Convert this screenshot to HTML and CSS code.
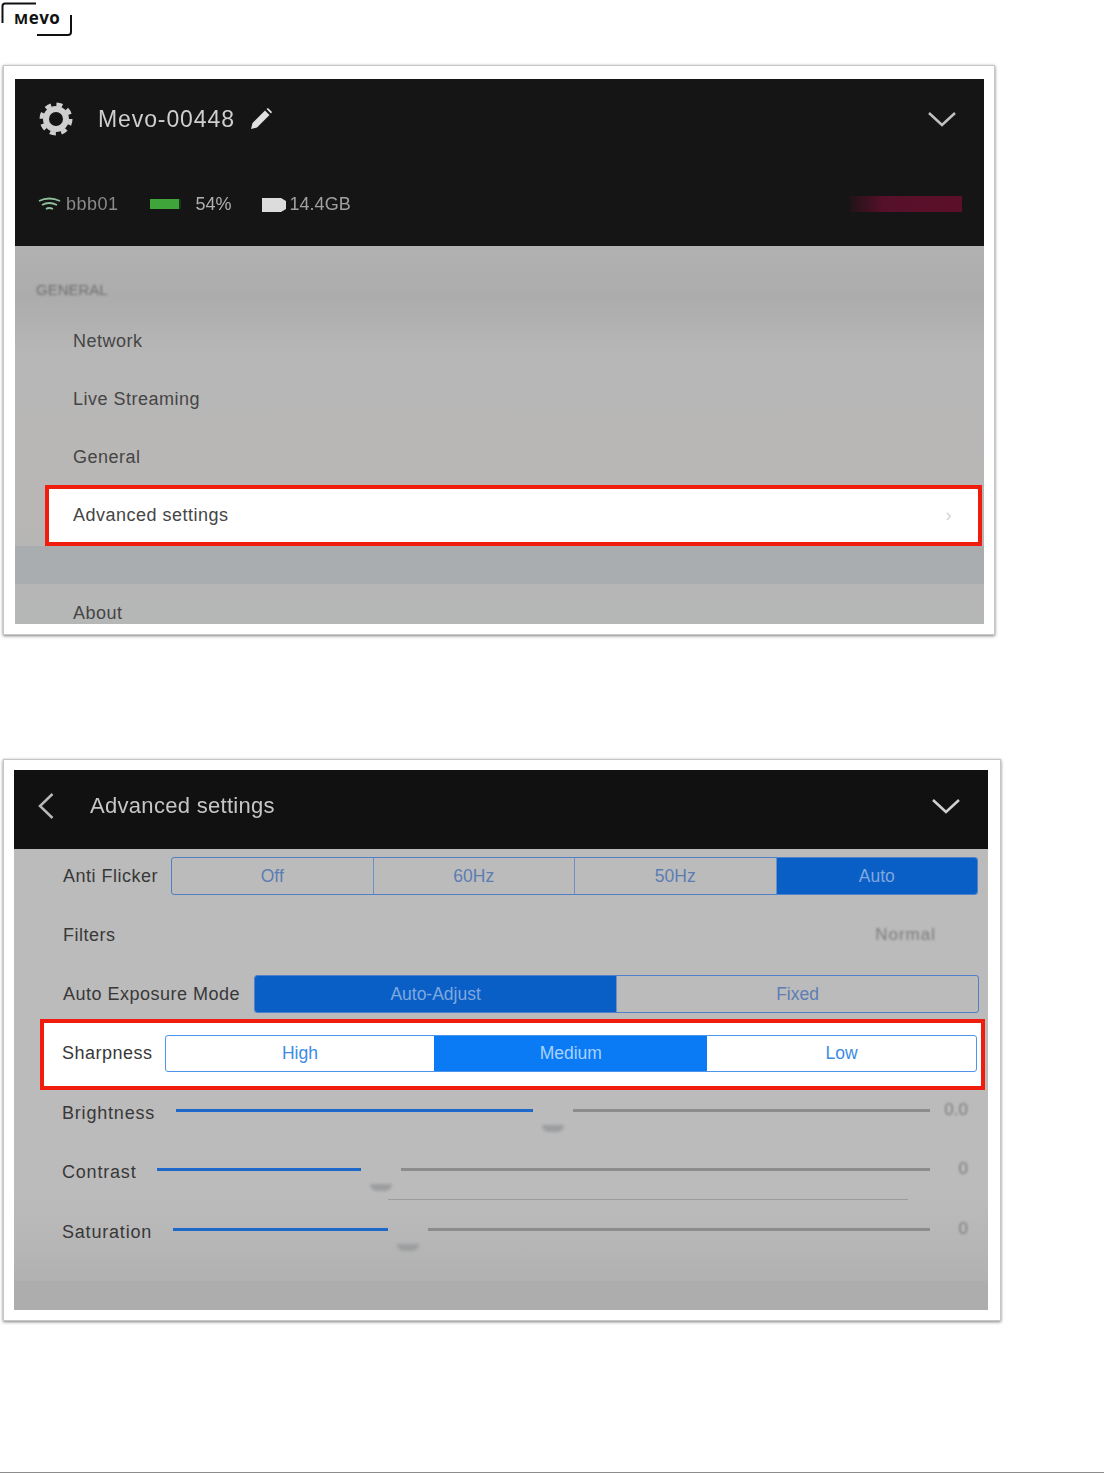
FILE: index.html
```html
<!DOCTYPE html>
<html lang="en">
<head>
  <meta charset="UTF-8" />
  <meta name="viewport" content="width=device-width, initial-scale=1.0" />
  <title>Mevo advanced settings</title>
  <link rel="stylesheet" href="styles.css">
</head>
<body>
  <header class="logo-bar">
    <svg class="logo" width="76" height="40" viewBox="0 0 76 40">
      <path d="M2.5 23V6Q2.5 3.500 5 3.500H36M71 15V32Q71 35 68 35H37" fill="none" stroke="#111" stroke-width="2"/>
      <text x="14" y="24" class="logo-text"><tspan class="logo-cap">M</tspan>evo</text>
    </svg>
  </header>

  <section class="card card-menu">
    <div class="screen">
      <div class="device-head">
        <div class="device-title">
          <svg class="gear" width="36" height="36" viewBox="0 0 36 36">
            <circle cx="18" cy="18" r="10" fill="none" stroke="#cfcfcf" stroke-width="6"/>
            <circle cx="18" cy="18" r="14.500" fill="none" stroke="#cfcfcf" stroke-width="4" stroke-dasharray="6 5.390"/>
          </svg>
          <span class="device-name">Mevo-00448</span>
          <svg width="24" height="24" viewBox="0 0 24 24">
            <path d="M2 22l1.500-6L16 3.500l4.500 4.500L8 20.500zM17.500 2l1.500-1 4 4-1 1.500z" fill="#e0e0e0"/>
          </svg>
          <svg class="chevron" width="30" height="18" viewBox="0 0 30 18">
            <path d="M2 3l13 12L28 3" fill="none" stroke="#c0c0c0" stroke-width="2.500"/>
          </svg>
        </div>
        <div class="device-status">
          <svg width="23" height="14" viewBox="0 0 23 14">
            <path d="M1 4q10-5 21 0M4 8q7-4 15 0M8 12q3-2 7 0" fill="none" stroke="#8fbf9a" stroke-width="1.800"/>
          </svg>
          <span class="stat stat-ssid">bbb01</span>
          <span class="battery"></span>
          <span class="stat stat-pct">54%</span>
          <svg class="sd" width="24" height="15" viewBox="0 0 24 15">
            <path d="M0 1h19l5 3v8l-5 3H0z" fill="#dcdcdc"/>
          </svg>
          <span class="stat">14.4GB</span>
          <span class="rec-bar"></span>
        </div>
      </div>
      <div class="menu">
        <p class="menu-heading">GENERAL</p>
        <div class="menu-row">Network</div>
        <div class="menu-row">Live Streaming</div>
        <div class="menu-row">General</div>
        <div class="menu-row menu-row-on">Advanced settings<span class="row-arrow">›</span></div>
        <div class="menu-gap"></div>
        <div class="menu-row menu-row-last">About</div>
      </div>
    </div>
  </section>

  <section class="card card-settings">
    <div class="screen">
      <div class="settings-head">
        <svg width="18" height="28" viewBox="0 0 18 28">
          <path d="M15.500 2L3 14l12.500 12" fill="none" stroke="#b8b8b8" stroke-width="2.500"/>
        </svg>
        <span class="settings-title">Advanced settings</span>
        <svg class="chevron" width="30" height="18" viewBox="0 0 30 18">
          <path d="M2 3l13 12L28 3" fill="none" stroke="#d0d0d0" stroke-width="2.500"/>
        </svg>
      </div>
      <div class="settings">
        <div class="row row-flicker">
          <span class="row-label">Anti Flicker</span>
          <div class="seg seg-dim">
            <span class="seg-item">Off</span>
            <span class="seg-item">60Hz</span>
            <span class="seg-item">50Hz</span>
            <span class="seg-item seg-on">Auto</span>
          </div>
        </div>
        <div class="row row-filters">
          <span class="row-label">Filters</span>
          <span class="filter-value">Normal</span>
        </div>
        <div class="row row-exposure">
          <span class="row-label">Auto Exposure Mode</span>
          <div class="seg seg-dim">
            <span class="seg-item seg-on seg-half">Auto-Adjust</span>
            <span class="seg-item">Fixed</span>
          </div>
        </div>
        <div class="row-sharp">
          <span class="row-label">Sharpness</span>
          <div class="seg seg-bright">
            <span class="seg-item">High</span>
            <span class="seg-item seg-on">Medium</span>
            <span class="seg-item">Low</span>
          </div>
        </div>
        <div class="slider slider-first">
          <span class="row-label">Brightness</span>
          <span class="fill" style="width: 357px"></span>
          <span class="thumb"></span>
          <span class="rest"></span>
          <span class="slider-value">0.0</span>
        </div>
        <div class="slider">
          <span class="row-label">Contrast</span>
          <span class="fill" style="width: 204px"></span>
          <span class="thumb"></span>
          <span class="rest"></span>
          <span class="slider-value">0</span>
        </div>
        <div class="divider"></div>
        <div class="slider slider-last">
          <span class="row-label">Saturation</span>
          <span class="fill" style="width: 215px"></span>
          <span class="thumb"></span>
          <span class="rest"></span>
          <span class="slider-value">0</span>
        </div>
        <div class="settings-foot"></div>
      </div>
    </div>
  </section>

  <footer class="page-rule"></footer>
</body>
</html>
```

FILE: styles.css
```css
* {
  box-sizing: border-box;
}
html,
body {
  margin: 0;
  height: 1473px;
  overflow: hidden;
}
body {
  display: flex;
  flex-direction: column;
  background: #fff;
  font-family: "Liberation Sans", Arial, sans-serif;
}
.logo-bar {
  height: 65px;
  flex: none;
}
.logo {
  display: block;
}
.logo-text {
  font-family: "Open Sans", sans-serif;
  font-size: 17px;
  font-weight: 700;
  letter-spacing: 0.5px;
  fill: #111;
}
.logo-cap {
  font-size: 15px;
}

/* screenshot frames */
.card {
  flex: none;
  margin-left: 3px;
  background: #fff;
  border: 1px solid #c6c6c6;
  box-shadow: 0 1px 3px rgba(0, 0, 0, 0.5);
}
.card-menu {
  width: 992px;
  height: 570px;
  padding: 13px 10px 10px 11px;
}
.card-settings {
  width: 998px;
  height: 562px;
  margin-top: 124px;
  padding: 10px 12px 10px 10px;
}
.screen {
  height: 100%;
  overflow: hidden;
  display: flex;
  flex-direction: column;
}

/* first screen */
.device-head {
  height: 167px;
  flex: none;
  background: #151515;
  padding-left: 23px;
  filter: blur(0.7px);
}
.device-title {
  display: flex;
  align-items: center;
  height: 80px;
  padding-right: 27px;
}
.device-name {
  margin: 0 14px 0 24px;
  font-size: 23px;
  letter-spacing: 0.9px;
  color: #cfcfcf;
}
.chevron {
  margin-left: auto;
}
.device-status {
  display: flex;
  align-items: center;
  height: 50px;
  margin-top: 20px;
  padding-right: 22px;
}
.stat {
  font-size: 18px;
  color: #a0a0a0;
}
.stat-ssid {
  margin-left: 5px;
  letter-spacing: 0.5px;
  color: #8a8a8a;
}
.battery {
  width: 31px;
  height: 10px;
  margin: 0 15px 0 31px;
  background: #3fa53a;
  border-right: 2px solid #16361a;
}
.sd {
  margin: 0 4px 0 30px;
}
.stat-pct {
  color: #b0b0b0;
}
.rec-bar {
  width: 112px;
  height: 16px;
  margin-left: auto;
  background: linear-gradient(90deg, #221318, #56102a 30%, #5c0f28);
}
.menu {
  flex: 1;
  min-height: 0;
  background: linear-gradient(#b2b2b2 0, #acacac 50px, #b7b7b7 110px, #b9b7b6 230px, #b5b6b6 100%);
  filter: blur(0.7px);
}
.menu-heading {
  height: 66px;
  margin: 0;
  padding: 36px 0 0 21px;
  font-size: 15px;
  line-height: 16px;
  color: #6f6f6f;
  filter: blur(0.8px);
}
.menu-row {
  display: flex;
  align-items: center;
  justify-content: space-between;
  height: 58px;
  padding-left: 58px;
  font-size: 18px;
  letter-spacing: 0.5px;
  color: #454545;
}
.menu-row-on {
  height: 61px;
  margin: -1px 2px 0 30px;
  padding: 0 26px 0 24px;
  background: #fff;
  border: 4px solid #f01c0e;
}
.row-arrow {
  color: #d4d4d4;
}
.menu-gap {
  height: 38px;
  background: #a9adb0;
}
.menu-row-last {
  height: 40px;
  padding-top: 18px;
}

/* second screen */
.settings-head {
  display: flex;
  align-items: center;
  height: 79px;
  flex: none;
  padding: 0 27px 8px 23px;
  background: #111;
  filter: blur(0.7px);
}
.settings-title {
  margin-left: 35px;
  font-size: 22px;
  letter-spacing: 0.3px;
  color: #c6c6c6;
}
.settings {
  flex: 1;
  min-height: 0;
  display: flex;
  flex-direction: column;
  background: linear-gradient(#bbbbbb, #bcbbbb 75%, #b6b6b6 86%, #adadad 100%);
  filter: blur(0.7px);
}
.row {
  display: flex;
  align-items: center;
  height: 38px;
  flex: none;
  padding-left: 49px;
}
.row-flicker {
  margin-top: 8px;
  padding-right: 10px;
}
.row-filters {
  margin-top: 21px;
  padding-right: 52px;
  justify-content: space-between;
}
.row-exposure {
  margin-top: 21px;
  padding-right: 9px;
}
.row-label {
  flex: none;
  font-size: 18px;
  letter-spacing: 0.5px;
  color: #383838;
}
.filter-value {
  font-size: 17px;
  letter-spacing: 1px;
  color: #7c7c7c;
  filter: blur(1.2px);
}
.seg {
  flex: 1;
  display: flex;
  height: 38px;
  margin-left: 12px;
  border: 1px solid #4f80c8;
  border-radius: 3px;
  overflow: hidden;
  font-size: 17.500px;
}
.row-flicker .seg {
  margin-left: 13px;
}
.row-exposure .seg {
  margin-left: 14px;
}
.seg-item {
  flex: 1;
  display: flex;
  align-items: center;
  justify-content: center;
  border-left: 1px solid #6f90c4;
}
.seg-item:first-child {
  border-left: 0;
}
.seg-dim .seg-item {
  color: #5c7db4;
}
.seg-dim .seg-on {
  background: #0a5fc6;
  color: #7fa8de;
}
.seg-half {
  flex: 0 0 361px;
}
.row-sharp {
  display: flex;
  align-items: center;
  height: 71px;
  flex: none;
  margin: 6px 3px 1px 26px;
  padding: 0 4px 3px 18px;
  background: #fff;
  border: 4px solid #f01c0e;
}
.seg-bright {
  height: 37px;
  border-color: #4d94ec;
}
.seg-bright .seg-item {
  color: #3b8ce6;
  border-left: 0;
}
.seg-bright .seg-on {
  flex: 0 0 273px;
  background: #0a7af5;
  color: #a9d2ff;
}
.slider {
  display: flex;
  align-items: center;
  height: 38px;
  flex: none;
  margin-top: 21px;
  padding: 0 2px 0 48px;
}
.slider .row-label {
  margin: 6px 21px 0 0;
  letter-spacing: 0.8px;
}
.slider-first,
.slider-last {
  margin-top: 0;
}
.fill {
  flex: none;
  height: 3px;
  background: #1d68c8;
}
.thumb {
  position: relative;
  flex: none;
  width: 40px;
  height: 38px;
}
.thumb::after {
  content: "";
  position: absolute;
  left: 9px;
  bottom: -3px;
  width: 22px;
  height: 7px;
  border-radius: 0 0 11px 11px;
  background: #9b9d9f;
  filter: blur(1.5px);
}
.rest {
  flex: 1;
  height: 3px;
  background: #8c8c8c;
}
.slider-value {
  flex: none;
  width: 56px;
  padding-right: 18px;
  text-align: right;
  font-size: 17px;
  color: #7e7e7e;
  filter: blur(0.8px);
}
.divider {
  height: 1px;
  flex: none;
  margin: 11px 80px 10px 374px;
  background: #9c9c9c;
}
.settings-foot {
  flex: 1;
  margin-top: 33px;
  background: #adadad;
}
.page-rule {
  height: 1px;
  flex: none;
  margin-top: auto;
  background: #8c8c8c;
}
```
